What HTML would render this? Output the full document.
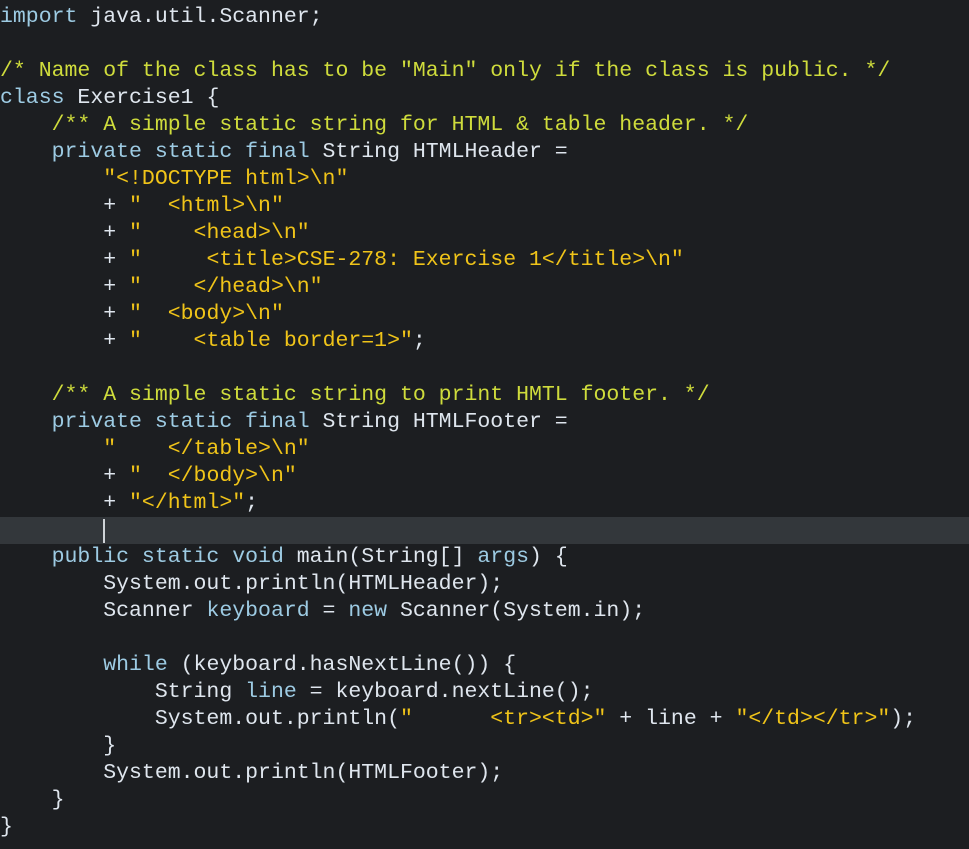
<!DOCTYPE html>
<html><head><style>
html,body{margin:0;padding:0;background:#1c1e21;width:969px;height:849px;overflow:hidden}
pre{margin:0;padding-top:4px;font-family:"Liberation Mono",monospace;font-size:21.5px;line-height:27px;color:#dfe6ee;white-space:pre}
.k{color:#9dcbe3}.c{color:#cfdc3c}.s{color:#f0c419}
.hl{display:block;background:#33373b;height:27px;position:relative}
.cur{position:absolute;left:103px;top:2px;width:2px;height:24px;background:#cfd3d7}
</style></head><body><pre><span class="k">import</span> java.util.Scanner;

<span class="c">/* Name of the class has to be "Main" only if the class is public. */</span>
<span class="k">class</span> Exercise1 {
    <span class="c">/** A simple static string for HTML &amp; table header. */</span>
    <span class="k">private static final</span> String HTMLHeader =
        <span class="s">"&lt;!DOCTYPE html&gt;\n"</span>
        + <span class="s">"  &lt;html&gt;\n"</span>
        + <span class="s">"    &lt;head&gt;\n"</span>
        + <span class="s">"     &lt;title&gt;CSE-278: Exercise 1&lt;/title&gt;\n"</span>
        + <span class="s">"    &lt;/head&gt;\n"</span>
        + <span class="s">"  &lt;body&gt;\n"</span>
        + <span class="s">"    &lt;table border=1&gt;"</span>;

    <span class="c">/** A simple static string to print HMTL footer. */</span>
    <span class="k">private static final</span> String HTMLFooter =
        <span class="s">"    &lt;/table&gt;\n"</span>
        + <span class="s">"  &lt;/body&gt;\n"</span>
        + <span class="s">"&lt;/html&gt;"</span>;
<span class="hl"><span class="cur"></span></span>    <span class="k">public static void</span> main(String[] <span class="k">args</span>) {
        System.out.println(HTMLHeader);
        Scanner <span class="k">keyboard</span> = <span class="k">new</span> Scanner(System.in);

        <span class="k">while</span> (keyboard.hasNextLine()) {
            String <span class="k">line</span> = keyboard.nextLine();
            System.out.println(<span class="s">"      &lt;tr&gt;&lt;td&gt;"</span> + line + <span class="s">"&lt;/td&gt;&lt;/tr&gt;"</span>);
        }
        System.out.println(HTMLFooter);
    }
}
</pre></body></html>
